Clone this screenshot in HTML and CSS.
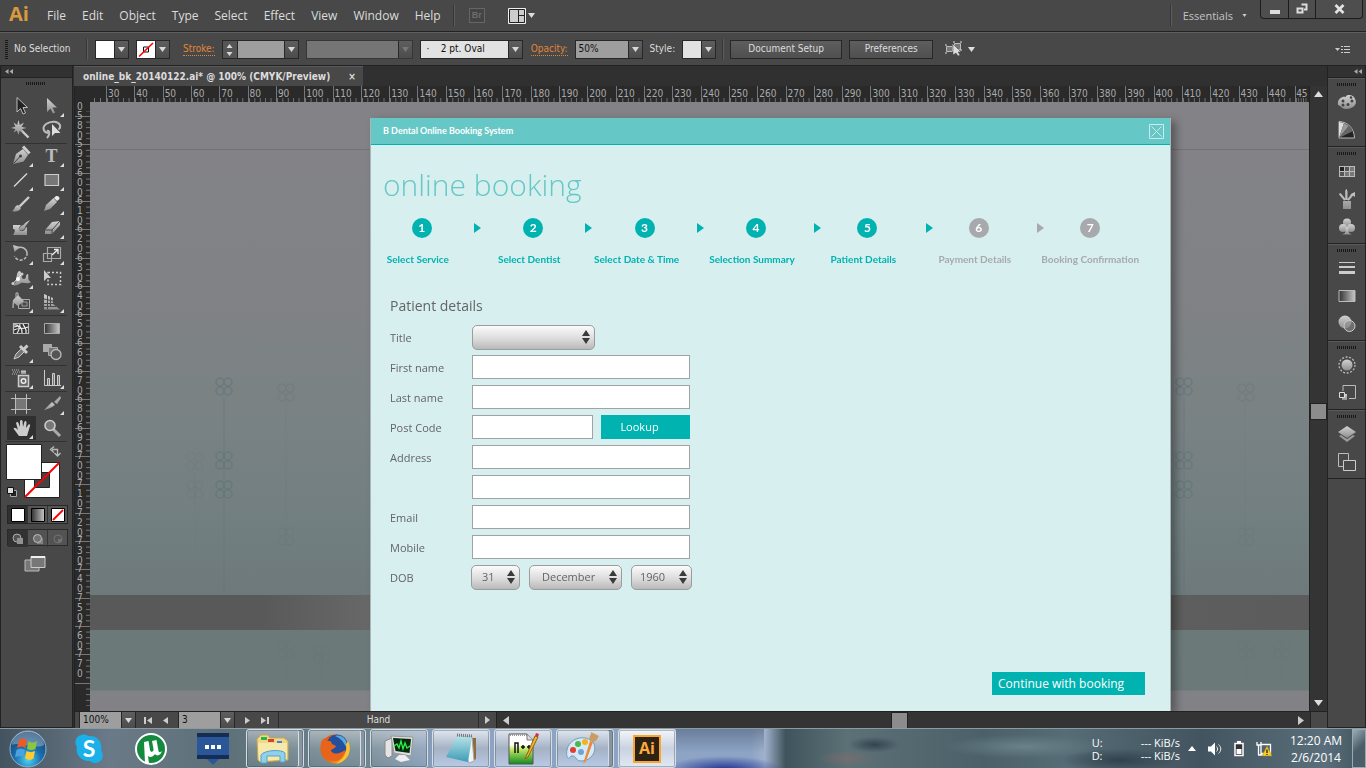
FILE: index.html
```html
<!DOCTYPE html>
<html lang="en">
<head>
<meta charset="utf-8">
<title>online_bk_20140122.ai</title>
<link rel="stylesheet" href="styles.css">
</head>
<body>
<svg class="defs" width="0" height="0" aria-hidden="true">
  <defs>
    <linearGradient id="metal" x1="0" y1="0" x2="0" y2="1"><stop offset="0" stop-color="#d2d2d2"/><stop offset="1" stop-color="#8e8e8e"/></linearGradient>
    <linearGradient id="fade"><stop offset="0" stop-color="#333"/><stop offset="1" stop-color="#c8c8c8"/></linearGradient>
    <radialGradient id="orb" cx=".5" cy=".8" r=".8"><stop offset="0" stop-color="#4fd3f5"/><stop offset=".45" stop-color="#1b6fae"/><stop offset="1" stop-color="#173a63"/></radialGradient>
    <linearGradient id="pad" x1="0" y1="0" x2="0" y2="1"><stop offset="0" stop-color="#b8e2ea"/><stop offset="1" stop-color="#3c9db5"/></linearGradient>
    <linearGradient id="green" x1="0" y1="0" x2="0" y2="1"><stop offset=".35" stop-color="#fff"/><stop offset=".5" stop-color="#c5ea6a"/><stop offset="1" stop-color="#128a1c"/></linearGradient>
    <linearGradient id="fox" x1="0" y1="0" x2="1" y2="1"><stop offset="0" stop-color="#e8541a"/><stop offset=".6" stop-color="#e66a17"/><stop offset="1" stop-color="#ffcf3a"/></linearGradient>
    <symbol id="down" viewBox="0 0 7 5"><path d="M0 0H7L3.500 5Z"/></symbol>
    <symbol id="updown" viewBox="0 0 8 14"><path d="M4 0L8 6H0ZM0 8H8L4 14Z"/></symbol>
    <symbol id="clover" viewBox="0 0 18 20"><g fill="none" stroke="#5f7478" stroke-width="1.500"><circle cx="5" cy="5" r="4"/><circle cx="13" cy="5" r="4"/><circle cx="5" cy="14" r="4"/><circle cx="13" cy="14" r="4"/></g></symbol>
  </defs>
</svg>
<div class="screen">
  <header class="menubar">
    <span class="logo">Ai</span>
    <nav class="menus">
      <button>File</button><button>Edit</button><button>Object</button><button>Type</button><button>Select</button><button>Effect</button><button>View</button><button>Window</button><button>Help</button>
    </nav>
    <span class="rule"></span>
    <button class="bridge">Br</button>
    <button class="arrange" aria-label="Arrange documents">
      <svg width="28" height="16" viewBox="0 0 28 16"><path d="M.5.500H17.500V15.500H.5Z" fill="#ccc" stroke="#eee"/><path d="M1.500 1.500H16.500V14.500H1.500ZM10.500 2V14M11 7.500H16" fill="none" stroke="#222"/><path d="M20 5H27L23.500 10Z" fill="#ddd"/></svg>
    </button>
    <span class="grow"></span>
    <span class="rule"></span>
    <button class="workspace-menu">Essentials <svg width="5" height="3"><use href="#down"/></svg></button>
    <div class="window-buttons">
      <button aria-label="Minimize"><svg width="10" height="12"><path d="M0 7H10V11H0Z" fill="#ddd"/></svg></button>
      <button aria-label="Restore"><svg width="12" height="12" viewBox="0 0 12 12"><path d="M5.500 1.500H10.500V6.500H8M1.500 5.500H6.500V9.500H1.500Z" fill="none" stroke="#ddd" stroke-width="2"/></svg></button>
      <button aria-label="Close"><svg width="11" height="10" viewBox="0 0 11 10"><path d="M1.500 1L9.500 9M9.500 1L1.500 9" stroke="#e4e4e4" stroke-width="2.600"/></svg></button>
    </div>
  </header>

  <div class="controlbar">
    <span class="grip-v"></span>
    <span class="selection">No Selection</span>
    <span class="rule"></span>
    <div class="combo fill"><button class="swatch" aria-label="Fill"></button><button class="drop" aria-label="Fill options"><svg width="7" height="5"><use href="#down"/></svg></button></div>
    <div class="combo"><button class="swatch" aria-label="Stroke"><svg width="18" height="17" viewBox="0 0 18 17"><path d="M6.500 6H11.500V11H6.500Z" fill="none" stroke="#111"/><path d="M2 15.500L16 2" stroke="#f00" stroke-width="1.600"/></svg></button><button class="drop" aria-label="Stroke options"><svg width="7" height="5"><use href="#down"/></svg></button></div>
    <label class="link stroke-label" for="weight">Stroke:</label>
    <div class="combo weight">
      <button class="spin" aria-label="Step weight"><svg width="7" height="15" viewBox="0 0 7 15"><path d="M3.500 2L6.500 6H.5ZM.5 10H6.500L3.500 14Z"/></svg></button>
      <input id="weight" class="f46"><button class="drop" aria-label="Weights"><svg width="7" height="5"><use href="#down"/></svg></button>
    </div>
    <div class="combo off"><input class="f91" aria-label="Width profile" disabled><button class="drop" disabled aria-label="Profiles"><svg width="7" height="5"><use href="#down"/></svg></button></div>
    <div class="combo brush"><input class="f87" aria-label="Brush" value=" ·    2 pt. Oval"><button class="drop" aria-label="Brushes"><svg width="7" height="5"><use href="#down"/></svg></button></div>
    <label class="link" for="opacity">Opacity:</label>
    <div class="combo opacity"><input id="opacity" class="f52" value="50%"><button class="drop" aria-label="Opacity values"><svg width="7" height="5"><use href="#down"/></svg></button></div>
    <span class="style-label">Style:</span>
    <div class="combo style"><button class="swatch grey" aria-label="Style"></button><button class="drop" aria-label="Styles"><svg width="7" height="5"><use href="#down"/></svg></button></div>
    <span class="rule"></span>
    <button class="push setup">Document Setup</button>
    <button class="push prefs">Preferences</button>
    <button class="similar" aria-label="Select similar objects"><svg width="31" height="16" viewBox="0 0 31 16"><path d="M1.500 5.500H7.500V10.500H1.500ZM9.500 2.500H15.500V8.500H9.500Z" fill="#777" stroke="#bbb"/><path d="M0 4H2M0 12H2M7 4H9M8 1H10M15 1H17M15 9H17" stroke="#ddd"/><path d="M8 3L8 14L11 12L13 15L15 14L13 11H16Z" fill="#ddd" stroke="#444" stroke-width=".5"/><path d="M23 6H30L26.500 11Z" fill="#ddd"/></svg></button>
    <span class="grow"></span>
    <button class="panel-menu" aria-label="Panel menu"><svg width="15" height="9" viewBox="0 0 15 9"><path d="M0 3H5L2.500 6Z" fill="#ccc"/><path d="M6 1.500H8M9 1.500H15M6 4.500H8M9 4.500H15M6 7.500H8M9 7.500H15" stroke="#ccc"/></svg></button>
  </div>

  <main class="workspace">
    <aside class="tools">
      <button class="collapse" aria-label="Collapse tools"><svg width="8" height="5" viewBox="0 0 8 5"><path d="M3.500 0V5L0 2.500ZM8 0V5L4.500 2.500Z" fill="#aaa"/></svg></button>
      <span class="grip-h"></span>
      <div class="tool-group">
        <button aria-label="Selection"><svg viewBox="0 0 24 24"><path d="M8 3.500V18L11.500 14.500L14 20L16.500 19L14 13.500H18.500Z" fill="#222" stroke="#bbb"/></svg></button>
        <button class="more" aria-label="Direct selection"><svg viewBox="0 0 24 24"><path d="M7 4V18L10.500 14.500L13 19.500L15 18.500L12.500 13.500H17Z"/></svg></button>
        <button aria-label="Magic wand"><svg viewBox="0 0 24 24"><path d="M10 10L19.500 19.500" stroke="#ccc" stroke-width="2.400"/><path d="M9.500 2L10.800 7L15 4.500L12.600 8.700L17.500 10L12.600 11.300L14 15L10.800 12.500L9.500 17L8 12.500L4.500 14.500L6.500 11L2 10L6.500 8.500L4.500 4.500L8.200 7Z"/></svg></button>
        <button aria-label="Lasso"><svg viewBox="0 0 24 24"><path d="M8 15C3 14 2 9 6 6C11 2.500 18 3 20 7C20.500 9 20 10.500 18.500 11.500M7 13C10 12 10 17 7 20" fill="none" stroke="#bbb" stroke-width="2"/><path d="M12 6V18L15 15H20.500Z" fill="#ddd"/></svg></button>
      </div>
      <div class="tool-group">
        <button class="more" aria-label="Pen"><svg viewBox="0 0 24 24"><path d="M4 20L7 10L14 5L19 11L14.500 17.500Z"/><path d="M14 2.500L20.500 9.500" stroke="#ccc" stroke-width="3"/><path d="M4.500 19.500L11 12.500" stroke="#444"/><circle cx="11.500" cy="12" r="1.600" fill="#444"/></svg></button>
        <button class="more type-tool" aria-label="Type">T</button>
        <button class="more" aria-label="Line"><svg viewBox="0 0 24 24"><path d="M5 18.500L18 5.500" stroke="#ddd" stroke-width="1.300"/></svg></button>
        <button class="more" aria-label="Rectangle"><svg viewBox="0 0 24 24"><path d="M5 6.500H18.500V17.500H5Z" fill="#777" stroke="#ccc" stroke-width="1.200"/></svg></button>
        <button aria-label="Paintbrush"><svg viewBox="0 0 24 24"><path d="M3 19C6 18 5 14 9 13L12 16C10 20 6 20 3 19Z"/><path d="M10.500 14.500L20 5" stroke="#ccc" stroke-width="2.400"/></svg></button>
        <button class="more" aria-label="Pencil"><svg viewBox="0 0 24 24"><path d="M4 19L6 13L13.500 6L17 10L10 17Z"/><path d="M14 6L17 9L19.500 7C19.500 4.500 18 3.500 16 4Z" fill="#eee"/></svg></button>
        <button aria-label="Blob brush"><svg viewBox="0 0 24 24"><path d="M4 9H12C9 12 9 15 13 15C16 15 16 12 18 11V19H4C6 16 7 13 4 13Z"/><path d="M10 14C10 9 15 10 16 7L21 4L16.500 10C16 14 13 15 10 14Z"/></svg></button>
        <button class="more" aria-label="Eraser"><svg viewBox="0 0 24 24"><path d="M5 14L12 6L20 5V9L12 18H5Z"/><path d="M5 14H12L20 5M12 14V18" fill="none" stroke="#444"/></svg></button>
      </div>
      <div class="tool-group">
        <button class="more" aria-label="Rotate"><svg viewBox="0 0 24 24"><path d="M7 7A6.500 6.500 0 1 1 5.500 14" fill="none" stroke="#bbb" stroke-width="1.500" stroke-dasharray="14 0 3 1.500 3 1.500 3 1.500 3 1.500"/><path d="M4 3L11 5L5.500 10Z"/></svg></button>
        <button class="more" aria-label="Scale"><svg viewBox="0 0 24 24"><path d="M7.500 5.500H20.500V16.500H7.500ZM3.500 11.500H11.500V19.500H3.500Z" fill="none" stroke="#aaa" stroke-width="1.200"/><path d="M12 13L17.500 8M14 7.500H18V12" fill="none" stroke="#eee" stroke-width="1.300"/></svg></button>
        <button class="more" aria-label="Width"><svg viewBox="0 0 24 24"><path d="M4 19C9 18 6 7 10 5C14 5 11 13 15 13C18 13 16 8 19 8C20 11 18 14 22 16C18 19 15 16 12 17C9 19 6 20 4 19Z"/><path d="M4 17.500L13 8" stroke="#eee"/><circle cx="4" cy="17.500" r="1.500" fill="#ccc"/><circle cx="13" cy="8" r="1.500" fill="#ccc"/><circle cx="9" cy="13" r="2" fill="#fff"/></svg></button>
        <button aria-label="Free transform"><svg viewBox="0 0 24 24"><path d="M8 6.500H20.500V18.500H8Z" fill="none" stroke="#ccc" stroke-width="1.500" stroke-dasharray="2 2"/><path d="M4 4V15L7 12H11Z" fill="#ccc"/></svg></button>
        <button class="more" aria-label="Shape builder"><svg viewBox="0 0 24 24"><path d="M9.500 9.500H20.500V18.500H9.500Z" fill="none" stroke="#aaa"/><path d="M13 12H18V16H13Z" fill="none" stroke="#999"/><path d="M4 10L9 5L15 11L9 16L5 13V18H3Z"/><path d="M7 9V3H9V7" fill="none" stroke="#bbb"/></svg></button>
        <button class="more" aria-label="Perspective grid"><svg viewBox="0 0 24 24"><path d="M4 4L13 8V14L20 19.500H4Z"/><path d="M7.500 5V19M10.500 6V16M4 9L13 11M4 13.500H13M4 16.500H16" fill="none" stroke="#484848"/></svg></button>
      </div>
      <div class="tool-group">
        <button aria-label="Mesh"><svg viewBox="0 0 24 24"><path d="M4.500 7.500H19.500V17.500H4.500Z" fill="#333" stroke="#bbb" stroke-width="1.200"/><path d="M5 9C10 8 12 12 8 17M11 8C9 12 14 11 13 17M5 14C10 11 13 14 19 11M14 8C15 11 18 12 17 17M5 11L9 10" fill="none" stroke="#eee" stroke-width="1.200"/></svg></button>
        <button aria-label="Gradient"><svg viewBox="0 0 24 24"><path d="M4.500 7.500H19.500V17.500H4.500Z" fill="url(#fade)" stroke="#aaa"/></svg></button>
        <button class="more" aria-label="Eyedropper"><svg viewBox="0 0 24 24"><path d="M5 19L7 14L13 8L16 11L10 17Z" fill="#777" stroke="#ccc"/><path d="M11 6L18 13M14.500 9.500L18.500 5.500" stroke="#ccc" stroke-width="3"/></svg></button>
        <button aria-label="Blend"><svg viewBox="0 0 24 24"><path d="M3 4H12V12H3Z" fill="#aaa"/><path d="M8.500 7.500H17.500V15.500H8.500Z" fill="#777" stroke="#aaa"/><circle cx="16" cy="14.500" r="5" fill="#555" stroke="#bbb" stroke-width="1.300"/></svg></button>
      </div>
      <div class="tool-group">
        <button class="more" aria-label="Symbol sprayer"><svg viewBox="0 0 24 24"><path d="M9.500 9.500H19.500V20.500H9.500Z" fill="#666" stroke="#ccc" stroke-width="1.500"/><path d="M12 4.500H17V8H12Z"/><path d="M3 4H11M4 6H11M3 8H8" stroke="#bbb" stroke-dasharray="1 1"/><circle cx="14.500" cy="15" r="2.300" fill="none" stroke="#eee" stroke-width="1.400"/></svg></button>
        <button class="more" aria-label="Column graph"><svg viewBox="0 0 24 24"><path d="M4.500 4V19.500H21" fill="none" stroke="#ccc"/><path d="M7.500 12.500H9.500V19.500H7.500ZM12.500 7.500H14.500V19.500H12.500ZM17.500 9.500H19.500V19.500H17.500Z" fill="#777" stroke="#ccc"/></svg></button>
      </div>
      <div class="tool-group">
        <button aria-label="Artboard"><svg viewBox="0 0 24 24"><path d="M6.500 6.500H17.500V17.500H6.500Z" fill="#777"/><path d="M2 6.500H22M2 17.500H22M6.500 2V22M17.500 2V22" stroke="#bbb"/></svg></button>
        <button class="more" aria-label="Slice"><svg viewBox="0 0 24 24"><path d="M4 18L12 10L15 13C11 16 8 17 4 18Z"/><path d="M14 10L20 4L21 6L17 12Z" fill="#aaa"/></svg></button>
        <button class="more active" aria-label="Hand"><svg viewBox="0 0 24 24"><path d="M9 20C7 17 5 15 3.500 12.500C4 11 6 11.500 8 14L6 7C6.500 5.500 8 5.500 8.500 7L10 11L10 5C10.500 3.500 12 3.500 12.500 5L13 11L14.500 5.500C15.500 4.500 16.500 5 16.500 6.500L16 12L18.500 8.500C20 8 20.500 9 20 10L17 20Z" fill="#ccc"/></svg></button>
        <button aria-label="Zoom"><svg viewBox="0 0 24 24"><path d="M13 13L20 20" stroke="#aaa" stroke-width="3"/><circle cx="10" cy="9.500" r="5" fill="#777" stroke="#ccc" stroke-width="1.600"/></svg></button>
      </div>
      <button class="colors" aria-label="Fill and stroke"><svg width="60" height="57" viewBox="0 0 60 57"><path d="M18.500 19.500H53.500V54.500H18.500Z" fill="#fff" stroke="#222"/><path d="M28.500 29.500H43.500V44.500H28.500Z" fill="#444" stroke="#222"/><path d="M19 54L53 20" stroke="#f00" stroke-width="2"/><path d="M.5 1.500H35.500V36.500H.5Z" fill="#fff" stroke="#222"/><path d="M46 6.500H51.500V12M48 3.500L44.500 6.500L48 9.500M48.500 10L51.500 13L54.500 10" fill="none" stroke="#bbb" stroke-width="1.300"/><path d="M4.500 47.500H10.500V53.500H4.500Z" fill="#222" stroke="#aaa"/><path d="M1.500 44.500H7.500V50.500H1.500Z" fill="#ddd" stroke="#111"/></svg></button>
      <div class="seg paint">
        <button aria-label="Color"><svg viewBox="0 0 14 14"><path d="M.5.500H13.500V13.500H.5Z" fill="#fff" stroke="#000"/></svg></button>
        <button aria-label="Gradient fill"><svg viewBox="0 0 14 14"><path d="M.5.500H13.500V13.500H.5Z" fill="url(#fade)" stroke="#000"/></svg></button>
        <button aria-label="None"><svg viewBox="0 0 14 14"><path d="M.5.500H13.500V13.500H.5Z" fill="#fff" stroke="#000"/><path d="M2 12L12 2" stroke="#f00" stroke-width="1.800"/></svg></button>
      </div>
      <div class="seg modes">
        <button aria-label="Draw normal"><svg viewBox="0 0 14 14"><circle cx="6" cy="6" r="4" fill="#555" stroke="#bbb"/><path d="M6 6H12V12H6Z" fill="#999"/></svg></button>
        <button aria-label="Draw behind"><svg viewBox="0 0 14 14"><path d="M6 6H12V12H6Z" fill="#888"/><circle cx="6.500" cy="6.500" r="4" fill="#777" stroke="#ccc"/></svg></button>
        <button aria-label="Draw inside"><svg viewBox="0 0 14 14"><circle cx="7" cy="7" r="4" fill="none" stroke="#777"/><path d="M7 7H11V10H7Z" fill="#777"/></svg></button>
      </div>
      <button class="screen-mode" aria-label="Screen mode"><svg width="22" height="18" viewBox="0 0 22 18"><path d="M1 5H15V16H1Z" fill="#777" stroke="#bbb"/><path d="M7 1.500H21V12.500H7Z" fill="#777" stroke="#ccc"/><path d="M7 2H21" stroke="#eee" stroke-width="2"/></svg></button>
    </aside>

    <section class="document">
      <div class="tabs"><button class="tab">online_bk_20140122.ai* @ 100% (CMYK/Preview) <span class="close">×</span></button></div>
      <div class="stage">
        <div class="ruler-corner"></div>
        <div class="ruler-x">
          <span>30</span><span>40</span><span>50</span><span>60</span><span>70</span><span>80</span><span>90</span><span>100</span><span>110</span><span>120</span><span>130</span><span>140</span><span>150</span><span>160</span><span>170</span><span>180</span><span>190</span><span>200</span><span>210</span><span>220</span><span>230</span><span>240</span><span>250</span><span>260</span><span>270</span><span>280</span><span>290</span><span>300</span><span>310</span><span>320</span><span>330</span><span>340</span><span>350</span><span>360</span><span>370</span><span>380</span><span>390</span><span>400</span><span>410</span><span>420</span><span>430</span><span>440</span><span>45</span>
        </div>
        <button class="scroll-up" aria-label="Scroll up"><svg width="9" height="6"><path d="M4.500 0L9 6H0Z"/></svg></button>
        <div class="ruler-y">
          <span class="part">0</span><span>580</span><span>590</span><span>600</span><span>610</span><span>620</span><span>630</span><span>640</span><span>650</span><span>660</span><span>670</span><span>680</span><span>690</span><span>700</span><span>710</span><span>720</span><span>730</span><span>740</span><span>750</span><span>760</span><span>770</span><span></span>
        </div>
        <div class="canvas">
          <svg class="scenery" viewBox="0 0 1219 609" preserveAspectRatio="xMidYMin slice" aria-hidden="true">
            <g stroke="#657a7c" stroke-width="1.500" opacity=".7"><path d="M134 295V493M1094 295V493" /><path d="M105 370V450M196 300V440M1155 300V440" opacity=".4"/><path d="M196 545V582M232 550V582M1156 545V582M1192 550V582" opacity=".5"/></g>
            <use href="#clover" x="125" y="275" width="18" height="20"/><use href="#clover" x="125" y="349" width="18" height="20"/><use href="#clover" x="125" y="378" width="18" height="20"/>
            <use href="#clover" x="1085" y="275" width="18" height="20"/><use href="#clover" x="1085" y="349" width="18" height="20"/><use href="#clover" x="1085" y="378" width="18" height="20"/>
            <g opacity=".5"><use href="#clover" x="187" y="281" width="18" height="20"/><use href="#clover" x="1147" y="281" width="18" height="20"/></g>
            <g opacity=".25"><use href="#clover" x="96" y="350" width="18" height="20"/><use href="#clover" x="96" y="378" width="18" height="20"/><use href="#clover" x="187" y="425" width="18" height="20"/><use href="#clover" x="1147" y="425" width="18" height="20"/><use href="#clover" x="187" y="538" width="18" height="20"/><use href="#clover" x="223" y="543" width="18" height="20"/><use href="#clover" x="1147" y="538" width="18" height="20"/><use href="#clover" x="1183" y="538" width="18" height="20"/></g>
          </svg>
          <div class="booking">
            <div class="booking-title"><span>B Dental Online Booking System</span><button aria-label="Close booking"><svg width="15" height="15" viewBox="0 0 15 15"><path d="M.5.500H14.500V14.500H.5ZM2.500 2.500L12.500 12.500M12.500 2.500L2.500 12.500" fill="none" stroke="#c9eceb"/></svg></button></div>
            <form class="booking-body">
              <h1>online booking</h1>
              <ol class="steps">
                <li><b>1</b><span>Select Service</span></li>
                <li class="arrow"></li>
                <li><b>2</b><span>Select Dentist</span></li>
                <li class="arrow"></li>
                <li><b>3</b><span class="wide">Select Date &amp; Time</span></li>
                <li class="arrow"></li>
                <li><b>4</b><span>Selection Summary</span></li>
                <li class="arrow late"></li>
                <li><b>5</b><span>Patient Details</span></li>
                <li class="arrow late"></li>
                <li class="todo"><b>6</b><span>Payment Details</span></li>
                <li class="arrow late todo"></li>
                <li class="todo"><b>7</b><span class="last">Booking Confirmation</span></li>
              </ol>
              <h2>Patient details</h2>
              <div class="fields">
                <label for="title">Title</label>
                <div class="pick title"><select id="title"><option></option></select><svg width="8" height="14"><use href="#updown"/></svg></div>
                <label for="first">First name</label><input id="first">
                <label for="last">Last name</label><input id="last">
                <label for="post">Post Code</label>
                <div class="post"><input id="post"><button type="button" class="teal lookup">Lookup</button></div>
                <label for="addr">Address</label><input id="addr">
                <span></span><input aria-label="Address line 2">
                <label for="email">Email</label><input id="email">
                <label for="mobile">Mobile</label><input id="mobile">
                <label for="day">DOB</label>
                <div class="dob">
                  <div class="pick day"><select id="day"><option>31</option></select><svg width="8" height="14"><use href="#updown"/></svg></div>
                  <div class="pick month"><select aria-label="Month"><option>December</option></select><svg width="8" height="14"><use href="#updown"/></svg></div>
                  <div class="pick year"><select aria-label="Year"><option>1960</option></select><svg width="8" height="14"><use href="#updown"/></svg></div>
                </div>
              </div>
              <button type="button" class="teal continue">Continue with booking</button>
            </form>
          </div>
        </div>
        <div class="scroll-y"><span class="thumb"></span><button aria-label="Scroll down"><svg width="9" height="6"><path d="M0 0H9L4.500 6Z"/></svg></button></div>
        <footer class="status">
          <div class="combo"><input class="f40" aria-label="Zoom level" value="100%"><button class="drop" aria-label="Zoom levels"><svg width="7" height="5"><use href="#down"/></svg></button></div>
          <button class="nav" aria-label="First artboard"><svg width="9" height="7"><path d="M0 0H2V7H0ZM8 0V7L3 3.500Z"/></svg></button>
          <button class="nav" aria-label="Previous artboard"><svg width="5" height="7"><path d="M5 0V7L0 3.500Z"/></svg></button>
          <div class="combo"><input class="f40" aria-label="Artboard" value="3"><button class="drop" aria-label="Artboards"><svg width="7" height="5"><use href="#down"/></svg></button></div>
          <button class="nav" aria-label="Next artboard"><svg width="5" height="7"><path d="M0 0V7L5 3.500Z"/></svg></button>
          <button class="nav" aria-label="Last artboard"><svg width="9" height="7"><path d="M1 0V7L6 3.500ZM7 0H9V7H7Z"/></svg></button>
          <span class="tool-name">Hand</span>
          <button class="nav more-status" aria-label="Status options"><svg width="5" height="8"><path d="M0 0V8L5 4Z"/></svg></button>
          <div class="scroll-x"><button aria-label="Scroll left"><svg width="6" height="9"><path d="M6 0V9L0 4.500Z"/></svg></button><span class="thumb"></span><button aria-label="Scroll right"><svg width="6" height="9"><path d="M0 0V9L6 4.500Z"/></svg></button></div>
          <span class="corner"></span>
        </footer>
      </div>
    </section>

    <aside class="dock">
      <button class="collapse" aria-label="Expand panels"><svg width="8" height="5" viewBox="0 0 8 5"><path d="M3.500 0V5L0 2.500ZM8 0V5L4.500 2.500Z" fill="#aaa"/></svg></button>
      <div class="dock-group">
        <span class="grip-h"></span>
        <button aria-label="Color"><svg viewBox="0 0 20 20"><path d="M1 13C0 7 5 4 9 5C8 2 17 2 18 7C21 12 16 17 9 17C5 17 3 13 1 13Z"/><g fill="#444"><circle cx="6" cy="9" r="1.500"/><circle cx="11" cy="12.500" r="1.500"/><circle cx="15" cy="9" r="1.500"/><circle cx="6" cy="13" r="1.500"/><circle cx="14" cy="5.500" r="1.300"/></g></svg></button>
        <button aria-label="Color guide"><svg viewBox="0 0 20 20"><path d="M2 1.500C11 2 17 8 17.500 18H2Z" fill="#222" stroke="#bbb"/><path d="M2 18V2L7 3Z" fill="#ddd"/><path d="M2 18L7 3L12 6Z" fill="#999"/><path d="M2 18L12 6L16 11Z" fill="#666"/></svg></button>
      </div>
      <div class="dock-group">
        <span class="grip-h"></span>
        <button aria-label="Swatches"><svg viewBox="0 0 20 20"><path d="M2 5H18V16H2Z" fill="#bbb"/><path d="M3 6H7V10H3Z" fill="#222"/><path d="M8 6H12V10H8ZM3 11H7V15H3Z" fill="#555"/><path d="M13 6H17V10H13ZM8 11H12V15H8ZM13 11H17V15H13Z" fill="#777"/></svg></button>
        <button aria-label="Brushes"><svg viewBox="0 0 20 20"><path d="M6 12H14V20H6ZM8.500 1L10 0V11H8.500ZM3 4L8 11L2 5ZM12 11L14 5L18 3V8L15 6Z"/><path d="M3 5L8 11M16 5L11 11M9.500 2V11" stroke="#bbb" stroke-width="2"/></svg></button>
        <button aria-label="Symbols"><svg viewBox="0 0 20 20"><circle cx="10" cy="5.500" r="4"/><circle cx="6" cy="11" r="4"/><circle cx="14" cy="11" r="4"/><path d="M9 10H11L12 16L15 17.500H5L8 16Z"/></svg></button>
      </div>
      <div class="dock-group">
        <span class="grip-h"></span>
        <button aria-label="Stroke"><svg viewBox="0 0 20 20"><path d="M2 4H18V5H2ZM2 8H18V10H2ZM2 13H18V16H2Z" fill="#ccc"/></svg></button>
        <button aria-label="Gradient"><svg viewBox="0 0 20 20"><path d="M2 4.500H18V15.500H2Z" fill="url(#fade)" stroke="#bbb"/></svg></button>
        <button aria-label="Transparency"><svg viewBox="0 0 20 20"><circle cx="8" cy="8" r="6.500"/><circle cx="12.500" cy="12" r="5.500" fill="#888" fill-opacity=".6" stroke="#ccc"/></svg></button>
      </div>
      <div class="dock-group">
        <span class="grip-h"></span>
        <button aria-label="Appearance"><svg viewBox="0 0 20 20"><circle cx="10" cy="10" r="5.500"/><circle cx="10" cy="10" r="8" fill="none" stroke="#bbb" stroke-width="1.300" stroke-dasharray="2 1.600"/></svg></button>
        <button aria-label="Graphic styles"><svg viewBox="0 0 20 20"><path d="M6 8V2.500H18.500V15.500H12" fill="none" stroke="#bbb"/><path d="M5 11H10V17H5Z"/><path d="M2.500 9.500H7.500V14.500H2.500Z" fill="#444" stroke="#ddd"/></svg></button>
      </div>
      <div class="dock-group">
        <span class="grip-h"></span>
        <button aria-label="Layers"><svg viewBox="0 0 20 20"><path d="M10 2L19 8L10 14L1 8Z"/><path d="M2 12L4 11L10 15L16 11L18 12L10 18Z" fill="#999"/></svg></button>
        <button aria-label="Artboards"><svg viewBox="0 0 20 20"><path d="M1.500 1.500H11.500V14.500H1.500Z" fill="none" stroke="#bbb"/><path d="M6.500 8.500H18.500V18.500H6.500Z" fill="#484848" stroke="#ccc"/></svg></button>
      </div>
    </aside>
  </main>

  <footer class="taskbar">
    <button class="task start" aria-label="Start"><svg width="38" height="38" viewBox="0 0 38 38"><circle cx="19" cy="19" r="18" fill="url(#orb)" stroke="#8fb4cc"/><path d="M3 15A16 14 0 0 1 35 15C28 20 10 11 3 15Z" fill="#fff" opacity=".3"/><path d="M10 10C13 8 15 8 18 10L16.500 18C14 16 11 16 8 18Z" fill="#ee5a24"/><path d="M19.500 11C22 13 25 13 28 11L26.500 19C24 20.500 21 20.500 18 18.500Z" fill="#8cc63e"/><path d="M7.500 20C10 18 13 18 16 20L14.500 27C12 25.500 9 25.500 6 27.500Z" fill="#4aa3e0"/><path d="M17.500 21C20 22.500 23 22.500 26 21L24.500 28.500C22 30.500 18 30 16 28Z" fill="#ffcb2d"/></svg></button>
    <button class="task" aria-label="Skype"><svg width="30" height="30" viewBox="0 0 30 30"><path d="M8 1C10 0 13 1 14 2C23 1 29 8 27 16C31 22 28 29 21 29C19 29 17 28 16 27C7 28 1 20 3 13C-1 8 3 1 8 1Z" fill="#1bb0ea"/><text x="15" y="23" text-anchor="middle" class="skype-s">S</text></svg></button>
    <button class="task" aria-label="uTorrent"><svg width="32" height="32" viewBox="0 0 32 32"><circle cx="16" cy="16" r="15" fill="#138a3e" stroke="#fff" stroke-width="2"/><path d="M9 9L13.500 8L15 17C15.500 20 19 19 18.500 16L17 8L21.500 7L23.500 18C24 20 26 19 27 18C26 22 22 24 20 21C18 24 15 25 13 23L14 31L10 30Z" fill="#fff"/></svg></button>
    <button class="task" aria-label="Messages"><svg width="32" height="32" viewBox="0 0 32 32"><path d="M0 0H32V26H0Z" fill="#2a579a"/><path d="M0 0H32V4H0ZM0 22H32V26H0Z" fill="#152d52"/><path d="M10 26H22L16 32Z" fill="#2a579a"/><path d="M8 12H12V16H8ZM14 12H18V16H14ZM20 12H24V16H20Z" fill="#fff"/></svg></button>
    <button class="task open stack" aria-label="Explorer"><svg width="34" height="32" viewBox="0 0 34 32"><path d="M1 6L5 2H12L14 5H28L32 8V27L4 29L2 27Z" fill="#f0d888" stroke="#c9a94e"/><path d="M5 4H11V7H5Z" fill="#27b64a"/><path d="M12 6H18V9H12Z" fill="#d8412c"/><path d="M21 8H26V10H21Z" fill="#3488d8"/><path d="M2 10H31V26L3 28Z" fill="#f7e8ac"/><path d="M5 30V22C8 17 26 16 29 20V29H24V23H11V30Z" fill="#8fd0ea" stroke="#56a3c8"/></svg></button>
    <button class="task open stack" aria-label="Firefox"><svg width="32" height="32" viewBox="0 0 32 32"><circle cx="16" cy="16" r="14.500" fill="url(#fox)"/><circle cx="18" cy="12" r="10.500" fill="#244f9c"/><path d="M16 3C23 1 29 7 28 14C24 12 26 7 16 3Z" fill="#5aa9dc"/><path d="M2 9L5 5L7 8C10 7 13 8 13 11L17 13C16 16 12 16 12 18C15 22 21 21 26 17C25 27 17 30 11 27C3 24 1 16 2 9Z" fill="#e8641b"/><path d="M29 8C34 18 28 29 17 31C26 25 28 19 27 12Z" fill="#ffc22f"/></svg></button>
    <button class="task open" aria-label="Performance monitor"><svg width="32" height="28" viewBox="0 0 32 28"><path d="M2 6L9 3V21L5 23L2 20Z" fill="#e4e4e4" stroke="#888"/><path d="M8 1L30 2L28 21L11 18Z" fill="#ddd" stroke="#999"/><path d="M10 3L28 4L26.500 18L12.500 16Z" fill="#042a0c"/><path d="M11 11L14 9L16 13L18 6L20 14L22 8L24 13L27 11" fill="none" stroke="#2ff04a" stroke-width="1.300"/><path d="M16 20L22 20L27 25L18 27L12 24Z" fill="#eee"/></svg></button>
    <button class="task open lit" aria-label="Notepad"><svg width="32" height="31" viewBox="0 0 32 31"><path d="M26 5H31V26L27 28Z" fill="#8f6c3c"/><path d="M12 3L27 4L29 28L24 30Z" fill="#f1f5f6" stroke="#aaa"/><path d="M12 3L27 4L23 29L1 24Z" fill="url(#pad)"/><path d="M12 2L27 3" stroke="#777" stroke-width="3" stroke-dasharray="1 1"/></svg></button>
    <button class="task open lit" aria-label="Notepad++"><svg width="32" height="34" viewBox="0 0 32 34"><path d="M2 2H20L26 8V32H2Z" fill="url(#green)" stroke="#555"/><path d="M3 3H20" stroke="#999" stroke-width="2" stroke-dasharray="1 1"/><path d="M20 2V8H26" fill="#ddd" stroke="#777"/><path d="M8 21V11H11V21M14 15H18M16 13V17M20 15H24M22 13V17" fill="none" stroke="#111" stroke-width="1.500"/><path d="M18 27L28 4L31 5L21 25Z" fill="#f4b62a" stroke="#8a6415"/><path d="M28 4L29 1L32 2L31 5Z" fill="#d0344a"/></svg></button>
    <button class="task open lit stack" aria-label="Paint"><svg width="33" height="34" viewBox="0 0 33 34"><path d="M5 24C1 30 0 22 1 18C3 7 17 2 26 9C33 17 26 29 15 29C8 29 12 23 5 24Z" fill="#d6e9f6" stroke="#6f9cc0"/><circle cx="7" cy="18" r="3" fill="#e33d2f"/><circle cx="12" cy="12" r="3" fill="#4cb748"/><circle cx="19" cy="10" r="3" fill="#f6b21d"/><circle cx="15" cy="20" r="3" fill="#6ea5d8"/><path d="M17 32L24 9L27 10L20 29Z" fill="#e98b3a"/><path d="M24 9C22 4 26 3 25 0L33 4C31 7 31 9 27 10Z" fill="#c99c64"/></svg></button>
    <button class="task open current" aria-label="Illustrator"><span class="ai">Ai</span></button>
    <span class="grow"></span>
    <dl class="net"><dt>U:</dt><dd>--- KiB/s</dd><dt>D:</dt><dd>--- KiB/s</dd></dl>
    <div class="tray">
      <svg width="8" height="5"><path d="M4 0L8 5H0Z" fill="#fff"/></svg>
      <svg width="14" height="14" viewBox="0 0 14 14"><path d="M0 4.500H3L7 .5V13.500L3 9.500H0Z" fill="#fff"/><path d="M8.500 4.500C10 6 10 8 8.500 9.500M10.500 2.500C13.500 5 13.500 9 10.500 11.500" fill="none" stroke="#eee"/></svg>
      <svg width="10" height="16" viewBox="0 0 10 16"><path d="M3 0H7V2H3Z" fill="#fff"/><path d="M1 2.500H9V14.500H1Z" fill="#333" stroke="#fff" stroke-width="1.500"/><path d="M2.500 8H7.500V13H2.500Z" fill="#fff"/></svg>
      <svg width="16" height="16" viewBox="0 0 16 16"><path d="M5 3.500H14.500V12.500H5ZM2.500 4V14M1 1V4H5V1M2 14H8" fill="none" stroke="#fff" stroke-width="1.300"/><path d="M11 5L16 15H6Z" fill="#f7cf28" stroke="#a8820c" stroke-width=".5"/><path d="M11 8.500V12M11 13V14" stroke="#222" stroke-width="1.300"/></svg>
    </div>
    <time class="clock"><span>12:20 AM</span><span>2/6/2014</span></time>
    <button class="show-desktop" aria-label="Show desktop"></button>
  </footer>
</div>
</body>
</html>
```
FILE: styles.css
```css
* { box-sizing: border-box; }
body { margin: 0; background: #222; }
button, input, select { font: inherit; color: inherit; margin: 0; padding: 0; border: 0; border-radius: 0; background: none; }
svg { display: block; }
.defs { position: absolute; }
.grow { flex: 1; }

.screen {
  display: flex; flex-direction: column; height: 100vh; overflow: hidden;
  font: 10px/14px "DejaVu Sans Condensed", "DejaVu Sans", sans-serif; color: #dcdcdc;
}
.rule { width: 2px; height: 21px; background: #363636; border-right: 1px solid #5c5c5c; }

/* Menu bar */
.menubar { display: flex; align-items: center; height: 32px; background: #484848; border-bottom: 1px solid #222; font: 12px/16px "Open Sans", sans-serif; }
.logo { width: 47px; padding-left: 9px; padding-bottom: 4px; font: bold 20px/24px "Open Sans", sans-serif; color: #d99a3e; }
.menus { display: flex; gap: 16px; margin-right: 12px; }
.bridge { width: 16px; height: 15px; margin-left: 14px; border: 1px solid #666; font: bold 9px/13px "Liberation Sans", sans-serif; color: #6c6c6c; background: #444; }
.arrange { margin-left: 23px; }
.workspace-menu { display: flex; align-items: center; gap: 9px; margin: 0 13px 0 11px; color: #c4c4c4; fill: #ccc; font-size: 11px; }
.window-buttons { display: flex; align-self: flex-start; height: 19px; margin-right: 3px; border: 1px solid #1c1c1c; border-top: 0; border-radius: 0 0 4px 4px; background: #4e4e4e; }
.window-buttons button { display: grid; place-items: center; width: 27px; border-left: 1px solid #1c1c1c; }
.window-buttons button:first-child { border-left: 0; }
.window-buttons button:last-child { width: 47px; }

/* Control bar */
.controlbar { display: flex; align-items: center; height: 34px; padding: 0 16px 0 5px; background: #484848; border-top: 1px solid #5e5e5e; border-bottom: 1px solid #222; }
.grip-v { width: 3px; height: 19px; margin-right: 6px; background: repeating-linear-gradient(#181818 0 1px, transparent 1px 2px); }
.selection { width: 72px; }
.combo { display: flex; height: 19px; border: 1px solid #272727; fill: #d8d8d8; margin-left: 7px; }
.combo input { width: 46px; background: #9e9e9e; color: #111; padding: 0 3px; }
.combo .f91 { width: 91px; }
.combo .f87 { width: 87px; background: #e2e2e2; white-space: pre; }
.combo .f52 { width: 52px; }
.combo .f40 { width: 41px; }
.drop { display: grid; place-items: center; width: 14px; border-left: 1px solid #272727; background: linear-gradient(#5e5e5e, #4c4c4c); }
.swatch { width: 18px; background: #fff; }
.swatch.grey { background: #e2e2e2; }
.off { fill: #777; border-color: #363636; }
.combo.off input { background: #757575; }
.spin { display: grid; place-items: center; width: 15px; border-right: 1px solid #272727; background: #555; }
.link { color: #e0863a; border-bottom: 1px dotted #e0863a; line-height: 12px; margin-left: 8px; }
.stroke-label { margin-left: 13px; }
.style-label { margin-left: 7px; }
.style { margin-right: 6px; }
.push { height: 19px; border: 1px solid #272727; background: linear-gradient(#5e5e5e, #4f4f4f); }
.setup { width: 112px; margin-left: 6px; }
.prefs { width: 84px; margin: 0 12px 0 7px; }

/* Workspace */
.workspace { flex: 1; display: flex; min-height: 0; background: #303030; }
.tools, .dock { background: #484848; border: 1px solid #222; border-top: 0; }
.tools { width: 73px; margin-right: 1px; display: flex; flex-direction: column; }
.collapse { display: block; width: 100%; height: 12px; background: #323232; border-bottom: 1px solid #222; padding-left: 4px; }
.grip-h { display: block; width: 19px; height: 3px; margin: 4px auto; background: repeating-linear-gradient(90deg, #181818 0 1px, transparent 1px 2px); }
.tools .grip-h { margin: 4px 0 9px 25px; }
.tool-group { display: grid; grid-template-columns: 31px 31px; margin: 0 5px 0 4px; border-bottom: 1px solid #323232; padding-bottom: 1px; }
.tool-group button { position: relative; display: grid; place-items: center; height: 24px; }
.tool-group svg { width: 24px; height: 24px; fill: url(#metal); }
.more::after { content: ""; position: absolute; right: 3px; bottom: 1px; border: 2px solid; border-color: transparent #ddd #ddd transparent; }
.type-tool { font: bold 18px/24px "Liberation Serif", serif; color: #bbb; }
.tool-group .active { background: #303030; margin-left: 2px; }
.colors { margin: 1px 0 0 5px; width: 60px; }
.seg { display: flex; width: 61px; margin: 5px 0 0 6px; border: 1px solid #272727; background: #555; }
.seg button { flex: 1; display: grid; place-items: center; height: 17px; border-left: 1px solid #333; }
.seg button:first-child { background: #303030; border-left: 0; }
.seg svg { width: 14px; height: 14px; }
.modes { height: 17px; opacity: .9; }
.screen-mode { margin: 9px 0 0 23px; width: 22px; }

.dock { width: 39px; }
.dock .collapse { padding-left: 26px; }
.dock-group { display: flex; flex-direction: column; align-items: center; border-bottom: 1px solid #222; border-top: 1px solid #5a5a5a; padding-bottom: 2px; }
.dock .grip-h { margin: 4px 0 2px; }
.dock-group button { display: grid; place-items: center; height: 28px; }
.dock-group svg { width: 20px; height: 20px; fill: url(#metal); }

.document { flex: 1; display: flex; flex-direction: column; min-width: 0; }
.tabs { height: 20px; background: #303030; }
.tab { display: flex; align-items: center; gap: 18px; height: 20px; padding: 0 7px 0 9px; background: #484848; border-top: 1px solid #5a5a5a; font: bold 10px/14px "DejaVu Sans Condensed", sans-serif; }
.stage { flex: 1; display: grid; grid-template: 16px minmax(0, 1fr) 17px / 15px minmax(0, 1fr) 18px; min-height: 0; border-left: 1px solid #222; }
.ruler-corner { background: #2a2a2a; }
.ruler-x { display: flex; overflow: hidden; padding-left: 16px; background: linear-gradient(90deg, #777 1px, transparent 1px) 4px 100% / 6px 4px repeat-x #2a2a2a; color: #aaa; }
.ruler-x span { flex: 0 0 calc((100% + 15px) / 43); height: 16px; padding-left: 1px; border-left: 1px solid #777; background: linear-gradient(90deg, #777 1px, transparent 1px) 0 100% / 20% 4px repeat-x #2a2a2a; line-height: 15px; }
.ruler-x span:last-child { flex-basis: 13px; overflow: hidden; padding-left: 0; }
.ruler-y { display: grid; grid-template-rows: 9px repeat(21, 17fr) 3fr; overflow: hidden; background: #2a2a2a; color: #aaa; }
.ruler-y span {
  min-height: 0; padding: 0 6px 0 2px; word-break: break-all; line-height: 10px;
  background: linear-gradient(#777, #777) 0 5px / 100% 1px no-repeat, linear-gradient(#777 1px, transparent 1px) 100% 5px / 4px 20% repeat-y;
}
.ruler-y .part { background: none; }
.scroll-up, .scroll-y { background: #343434; border-left: 1px solid #222; fill: #ddd; }
.scroll-up { display: grid; place-items: center; }
.scroll-y { display: flex; flex-direction: column; align-items: center; justify-content: space-between; padding: 302px 1px 5px 0; }
.thumb { width: 15px; height: 15px; background: #8c8c8c; outline: 1px solid #222; }

.canvas {
  display: grid; overflow: hidden;
  background:
    linear-gradient(90deg, #595959 14%, #686868 23%, #5c5c5c 100%) 0 493px / 100% 35px no-repeat,
    linear-gradient(#737376, #737376) 0 47px / 100% 1px no-repeat,
    linear-gradient(#838387 0, #818286 180px, #7a8284 300px, #727f81 420px, #6d797a 493px, #6b7a79 528px, #6b7978 588px, #828286 589px);
}
.scenery { grid-area: 1 / 1; width: 100%; height: 100%; opacity: .6; }
.booking {
  grid-area: 1 / 1; position: relative; display: flex; flex-direction: column;
  margin: 16px 138px 0 280px; border: solid #a9b6b7; border-width: 0 1px;
  background: #d8efef; box-shadow: 5px 3px 8px #0005; font-family: "Open Sans", sans-serif; color: #636466;
}
.booking-title { display: flex; align-items: center; justify-content: space-between; height: 27px; padding: 0 6px 0 12px; background: #66c8c6; border-bottom: 1px solid #00b2b0; color: #fff; font: bold 9px/14px Lato, sans-serif; }
.booking-body { flex: 1; display: flex; flex-direction: column; padding: 18px 25px 16px 12px; font: 500 11px/16px "Open Sans", sans-serif; }
h1 { margin: 0; font: 300 30px/44px "Open Sans", sans-serif; color: #66c8c6; }
.steps { display: grid; grid-template-columns: 60fr 52fr 60fr 52fr 60fr 52fr 60fr 52fr 60fr 52fr 60fr 52fr 60fr; margin: 11px 25px 0 9px; padding: 0; list-style: none; color: #00b2b0; font: bold 10px/14px Lato, sans-serif; }
.steps li { display: flex; flex-direction: column; align-items: center; gap: 14px; white-space: nowrap; }
.steps b { width: 20px; height: 20px; border-radius: 50%; background: #00b2b0; color: #fff; font: bold 12px/20px Lato, sans-serif; text-align: center; }
.steps span { width: 0; display: flex; justify-content: center; padding-right: 8px; }
.steps .wide { padding-right: 16px; }
.steps .last { padding-right: 0; }
.steps .todo { color: #a7a9ac; }
.steps .todo b { background: #a7a9ac; }
.steps .arrow::before { content: ""; margin-top: 5px; border: solid transparent; border-width: 5px 0 5px 7px; border-left-color: currentColor; }
.steps .late { padding-left: 12px; }
h2 { margin: 29px 0 5px 7px; font: 500 14px/22px "Open Sans", sans-serif; }
.fields { display: grid; grid-template-columns: 82px 218px; grid-auto-rows: 30px; align-items: center; margin-left: 7px; }
.fields label { padding-top: 2px; }
.fields input { width: 100%; height: 24px; border: 1px solid #9fa3a6; background: #fff; padding: 0 4px; }
.post { display: flex; gap: 8px; }
.fields .post input { width: 121px; }
.teal { background: #00b2b0; color: #fff; }
.lookup { flex: 1; height: 24px; padding-right: 12px; }
.continue { align-self: flex-end; margin-top: auto; width: 153px; height: 23px; padding-left: 6px; text-align: left; font-size: 12px; font-weight: 400; }
.pick { display: grid; align-items: center; }
.pick select { grid-area: 1 / 1; width: 100%; height: 25px; appearance: none; border: 1px solid #9a9c9e; border-radius: 5px; padding-left: 10px; background: linear-gradient(#fbfbfb, #dcdcdc 55%, #b9b9b9); }
.pick svg { grid-area: 1 / 1; justify-self: end; margin-right: 5px; fill: #3a3a3a; pointer-events: none; }
.title { width: 123px; }
.dob { display: flex; justify-content: space-between; margin: 0 -2px 0 -1px; }
.day { width: 49px; }
.month { width: 93px; }
.month select { padding-left: 12px; }
.year { width: 61px; }
.year select { padding-left: 8px; }

.status { grid-column: 1 / -1; display: flex; align-items: stretch; background: #484848; border-top: 1px solid #222; fill: #ccc; }
.status .combo { height: 16px; margin-left: 4px; border-top: 0; border-bottom: 0; }
.status .combo + .nav { margin-left: 4px; }
.nav { display: grid; place-items: center; width: 17px; }
.tool-name { width: 200px; margin-left: 5px; border-left: 1px solid #2c2c2c; text-align: center; line-height: 16px; }
.more-status { width: 18px; border-left: 1px solid #2c2c2c; }
.scroll-x { flex: 1; display: grid; grid-template-columns: 12px 380fr 15px 388fr 12px; align-items: center; background: #343434; border-left: 1px solid #222; padding: 0 3px; }
.scroll-x button { display: grid; place-items: center; }
.scroll-x .thumb { grid-column: 3; }
.scroll-x button:last-child { grid-column: 5; }
.corner { width: 17px; border-left: 1px solid #222; }

/* Taskbar */
.taskbar {
  display: flex; align-items: stretch; gap: 4px; height: 40px; border-top: 1px solid #8c9aa2; color: #fff;
  background:
    radial-gradient(ellipse 60px 14px at 53% 105%, #1b2f93, transparent),
    radial-gradient(ellipse 26px 8px at 64% 40%, #33444f, transparent),
    radial-gradient(ellipse 30px 8px at 62% 75%, #8b6a6888, transparent),
    radial-gradient(ellipse 80px 12px at 75% 45%, #6a8187, transparent),
    radial-gradient(ellipse 60px 12px at 82% 80%, #30424d, transparent),
    linear-gradient(#2c3e5560, #2c3e5500 60%) 676px 0 / 88px 100% no-repeat,
    linear-gradient(90deg, #43535f, #6a7a88 8%, #5d7078 16%, #6f8590 27%, #8da3c4 33%, #8ea4c5 49%, #8ea4c5 55%, #9fb1cc 56%, #3f545c 57.500%, #5b7176 62%, #4b6068 72%, #566c76 78%, #42545f 88%, #5a6f7b 97%, #3f535e);
}
.task { display: grid; place-items: center; width: 58px; }
.start { width: 56px; }
.open { border: 1px solid #d5dde6; border-radius: 3px; background: linear-gradient(#ffffff70, #ffffff28 50%, #ffffff10); outline: 1px solid #2e3c4a55; outline-offset: -2px; }
.stack { padding-right: 5px; box-shadow: inset -4px 0 0 #44566488, inset -5px 0 0 #d5dde6; }
.lit { background: linear-gradient(#dfe6ef, #a5b2c4 50%, #b9cae6); }
.task.current { background: linear-gradient(#f3f6fa, #c9d2e0 50%, #e0e8f5); }
.ai { width: 28px; height: 28px; border: 2px solid #f9a72b; background: #2e2214; color: #fbab3a; font: bold 16px/23px "Open Sans", sans-serif; }
.skype-s { font: bold 23px Lato, sans-serif; fill: #fff; }
.net { display: grid; grid-template-columns: 49px auto; align-content: center; margin: 0 4px 0 0; font: 11px/13px "Open Sans", sans-serif; }
.net dd { margin: 0; }
.tray { display: flex; align-items: center; gap: 12px; margin-right: 14px; }
.clock { display: flex; flex-direction: column; align-items: center; justify-content: center; width: 52px; margin-right: 6px; font: 12px/17px "Open Sans", sans-serif; white-space: nowrap; }
.show-desktop { width: 14px; border: 1px solid #9aa8b0; background: linear-gradient(135deg, #9aabb4, #4a5d68 50%); }
```
